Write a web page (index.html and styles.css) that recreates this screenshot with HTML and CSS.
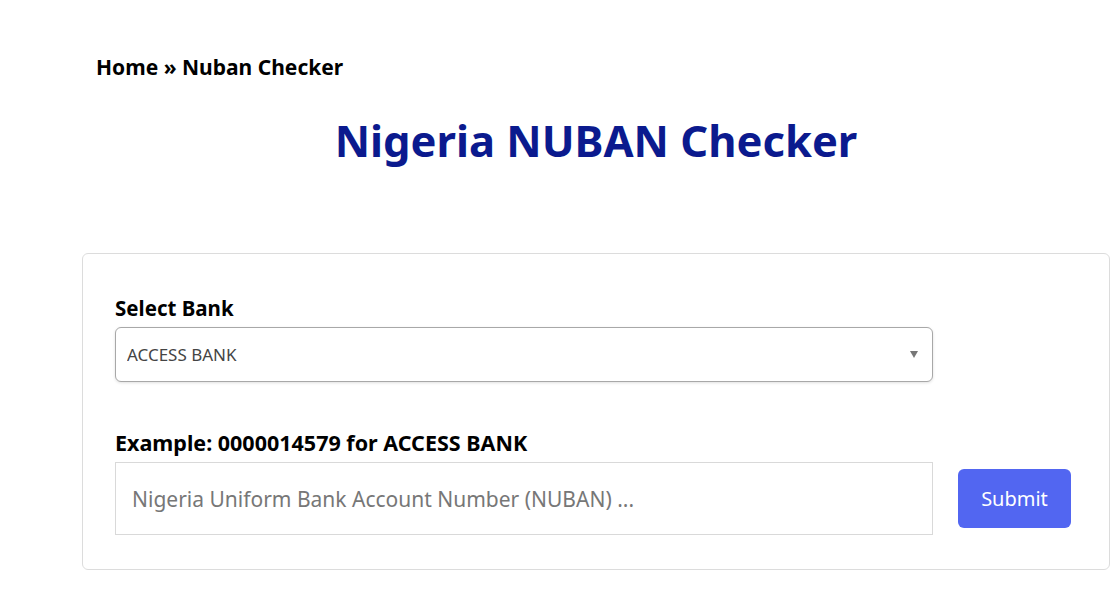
FILE: index.html
```html
<!DOCTYPE html>
<html lang="en">
  <head>
    <meta charset="UTF-8" />
    <meta name="viewport" content="width=device-width, initial-scale=1.0" />
    <title>Nigeria NUBAN Checker</title>
    <link rel="stylesheet" href="styles.css">
  </head>
  <body>
    <div class="page">
      <nav class="breadcrumb">
        <a href="#">Home</a> &raquo; <span>Nuban Checker</span>
      </nav>

      <h1 class="page-title">Nigeria NUBAN Checker</h1>

      <form class="nuban-card" onsubmit="return false;">
        <label class="field-label" for="bank">Select Bank</label>
        <div class="select-wrap">
          <select id="bank" class="bank-select">
            <option>ACCESS BANK</option>
            <option>ECOBANK</option>
            <option>FIDELITY BANK</option>
            <option>FIRST BANK OF NIGERIA</option>
            <option>GUARANTY TRUST BANK</option>
            <option>UNITED BANK FOR AFRICA</option>
            <option>ZENITH BANK</option>
          </select>
        </div>

        <label class="field-label example-label" for="nuban">Example: 0000014579 for ACCESS BANK</label>
        <div class="input-row">
          <input id="nuban" class="nuban-input" type="text" placeholder="Nigeria Uniform Bank Account Number (NUBAN) ..." />
          <button type="submit" class="submit-button">Submit</button>
        </div>
      </form>
    </div>
  </body>
</html>
```

FILE: styles.css
```css
/* nuban checker page */

* {
  margin: 0;
  padding: 0;
  box-sizing: border-box;
}

body {
  font-family: "Noto Sans", "Open Sans", sans-serif;
  background-color: #fff;
  color: #000;
}

.page {
  width: 1028px;
  margin-left: 82px;
  padding-top: 50px;
}

.breadcrumb {
  padding-left: 14px;
  font-size: 21px;
  font-weight: 700;
  line-height: 34px;
}

.breadcrumb a {
  color: #000;
  text-decoration: none;
}

.page-title {
  text-align: center;
  font-size: 43.5px;
  font-weight: 700;
  color: #0b1a8e;
  margin-top: 26px;
  line-height: 60px;
}

.nuban-card {
  margin-top: 83px;
  border: 1px solid #dcdcdc;
  border-radius: 6px;
  padding: 40px 32px 34px 32px;
}

.field-label {
  display: block;
  font-size: 20.5px;
  font-weight: 700;
  line-height: 28px;
  margin-bottom: 5px;
}

.select-wrap {
  position: relative;
  width: 818px;
}

.bank-select {
  width: 100%;
  height: 55px;
  padding: 0 40px 0 11px;
  border: 1px solid #a8a8a8;
  border-radius: 6px;
  box-shadow: 0 1px 3px rgba(0, 0, 0, 0.12);
  background-color: #fff;
  font-family: inherit;
  font-size: 17px;
  color: #444;
  appearance: none;
  -webkit-appearance: none;
}

/* small triangle for the dropdown */
.select-wrap::after {
  content: "";
  position: absolute;
  right: 15px;
  top: 24px;
  border-left: 4px solid transparent;
  border-right: 4px solid transparent;
  border-top: 7px solid #777;
  pointer-events: none;
}

.example-label {
  margin-top: 47px;
  font-size: 21.5px;
}

.input-row {
  display: flex;
  align-items: center;
  gap: 25px;
}

.nuban-input {
  width: 818px;
  height: 73px;
  padding: 0 16px;
  border: 1px solid #d9d9d9;
  font-family: inherit;
  font-size: 21px;
  color: #333;
}

.nuban-input::placeholder {
  color: #777;
}

.submit-button {
  width: 113px;
  height: 59px;
  border: none;
  border-radius: 6px;
  background-color: #5266f1;
  color: #fff;
  font-family: inherit;
  font-size: 20px;
  cursor: pointer;
}

.submit-button:hover {
  background-color: #3f53de;
}
```
